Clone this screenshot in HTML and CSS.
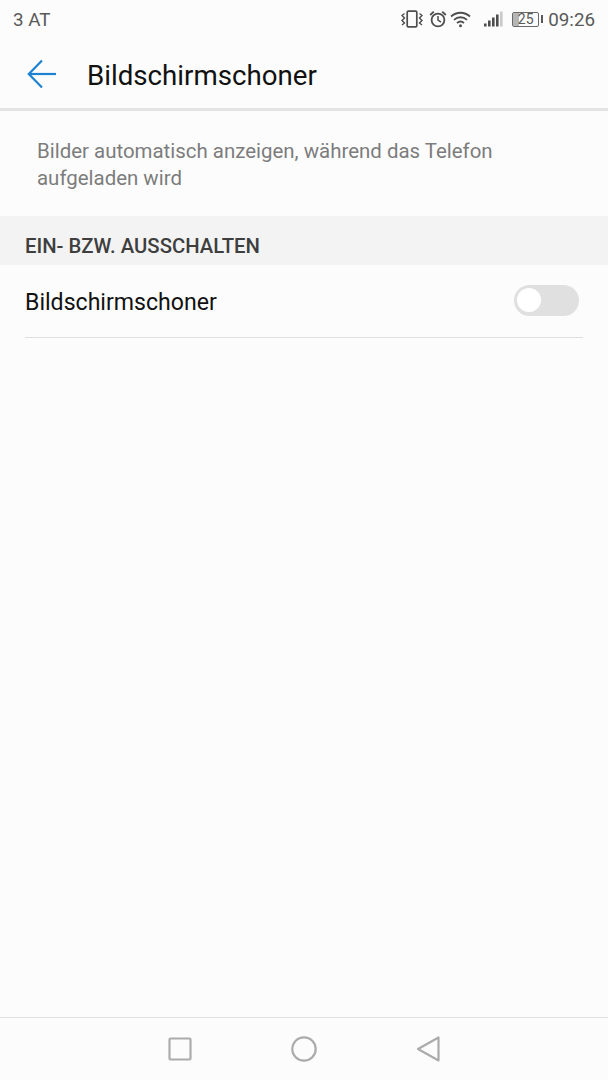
FILE: index.html
```html
<!DOCTYPE html>
<html lang="de">
<head>
    <meta charset="UTF-8">
    <meta name="viewport" content="width=device-width, initial-scale=1.0">
    <title>Bildschirmschoner</title>
    <link rel="stylesheet" href="styles.css">
</head>
<body>
    <div class="screen">
        <div class="status-bar">
            <span class="carrier">3 AT</span>
            <div class="status-icons">
                <svg class="icon-vibrate" width="22" height="18" viewBox="0 0 22 18" fill="none" stroke="#4e4e4e" stroke-width="1.7">
                    <rect x="6.2" y="1.2" width="9.6" height="15.6" rx="1"/>
                    <path d="M3.5 3.5 L1 5.5 L3.5 8 L1 10.5 L3.5 13 L1 15" stroke-width="1.4"/>
                    <path d="M18.5 3.5 L21 5.5 L18.5 8 L21 10.5 L18.5 13 L21 15" stroke-width="1.4"/>
                </svg>
                <svg class="icon-alarm" width="18" height="18" viewBox="0 0 18 18" fill="none" stroke="#4e4e4e" stroke-width="1.8">
                    <circle cx="9" cy="10" r="6.4"/>
                    <path d="M9 6 V10.2 L12 12.2" stroke-width="1.5"/>
                    <path d="M1.2 5 L4.8 1.6 M16.8 5 L13.2 1.6"/>
                </svg>
                <svg class="icon-wifi" width="21" height="17" viewBox="0 0 21 17" fill="none" stroke="#4e4e4e" stroke-width="1.8">
                    <path d="M1 5.5 C6.5 0.5 14.5 0.5 20 5.5"/>
                    <path d="M4 8.8 C7.8 5.4 13.2 5.4 17 8.8"/>
                    <path d="M7 12 C9 10.3 12 10.3 14 12"/>
                    <circle cx="10.5" cy="14.8" r="1.5" fill="#4e4e4e" stroke="none"/>
                </svg>
                <svg class="icon-signal" width="19" height="17" viewBox="0 0 19 17">
                    <rect x="0" y="12.5" width="2.6" height="3" fill="#4e4e4e"/>
                    <rect x="4" y="9.5" width="2.6" height="6" fill="#4e4e4e"/>
                    <rect x="8" y="6.5" width="2.6" height="9" fill="#4e4e4e"/>
                    <rect x="12" y="3.5" width="2.6" height="12" fill="#4e4e4e"/>
                    <rect x="16" y="0.5" width="2.6" height="15" fill="#c9c9c9"/>
                </svg>
                <div class="battery">
                    <div class="battery-body">
                        <div class="battery-fill"></div>
                        <span class="battery-level">25</span>
                    </div>
                    <div class="battery-tip"></div>
                </div>
                <span class="clock">09:26</span>
            </div>
        </div>

        <div class="title-bar">
            <svg class="back-arrow" width="30" height="30" viewBox="0 0 30 30" fill="none" stroke="#1e82d2" stroke-width="2.2">
                <path d="M29 15 H2"/>
                <path d="M15 1.5 L1.8 15 L15 28.5"/>
            </svg>
            <h1>Bildschirmschoner</h1>
        </div>

        <p class="description">Bilder automatisch anzeigen, während das Telefon aufgeladen wird</p>

        <div class="section-header">EIN- BZW. AUSSCHALTEN</div>

        <div class="setting-row">
            <span class="setting-label">Bildschirmschoner</span>
            <div class="switch"><div class="switch-knob"></div></div>
        </div>

        <div class="spacer"></div>

        <div class="nav-bar">
            <svg width="24" height="24" viewBox="0 0 24 24" fill="none" stroke="#ababab" stroke-width="2.2">
                <rect x="1.5" y="1.5" width="21" height="21" rx="1"/>
            </svg>
            <svg width="26" height="26" viewBox="0 0 26 26" fill="none" stroke="#ababab" stroke-width="2.2">
                <circle cx="13" cy="13" r="11.7"/>
            </svg>
            <svg width="24" height="26" viewBox="0 0 24 26" fill="none" stroke="#ababab" stroke-width="2.2" stroke-linejoin="round">
                <path d="M22.5 1.5 V24.5 L2 13 Z"/>
            </svg>
        </div>
    </div>
</body>
</html>
```

FILE: styles.css
```css
html, body {
    margin: 0;
    padding: 0;
}
body {
    font-family: Roboto, 'Noto Sans', sans-serif;
    background-color: #fcfcfc;
}
.screen {
    width: 608px;
    height: 1080px;
    display: flex;
    flex-direction: column;
    overflow: hidden;
}
.status-bar {
    height: 38px;
    display: flex;
    align-items: center;
    justify-content: space-between;
    padding: 0 13px 0 13px;
    color: #5a5a5a;
    font-size: 18.8px;
    flex-shrink: 0;
}
.carrier, .clock {
    margin-top: 2px;
}
.status-icons {
    display: flex;
    align-items: center;
}
.icon-vibrate {
    margin-right: 6px;
}
.icon-alarm {
    margin-right: 3px;
}
.icon-wifi {
    margin-right: 13px;
}
.icon-signal {
    margin-right: 9px;
}
.battery {
    display: flex;
    align-items: center;
    margin-right: 5px;
}
.battery-body {
    position: relative;
    width: 25px;
    height: 13px;
    border: 1px solid #6a6a6a;
    border-radius: 2px;
}
.battery-fill {
    width: 6px;
    height: 100%;
    background-color: #b5b5b5;
}
.battery-level {
    position: absolute;
    top: 0;
    left: 0;
    right: 0;
    text-align: center;
    font-size: 14px;
    line-height: 13px;
}
.battery-tip {
    width: 2px;
    height: 8px;
    margin-left: 2px;
    background-color: #5a5a5a;
}
.title-bar {
    height: 70px;
    box-sizing: content-box;
    display: flex;
    align-items: center;
    padding-left: 27px;
    border-bottom: 3px solid #e4e4e4;
    flex-shrink: 0;
}
.back-arrow {
    margin-top: 2px;
}
.title-bar h1 {
    margin: 4px 0 0 30px;
    font-size: 27.7px;
    font-weight: 400;
    color: #111;
}
.description {
    margin: 0;
    padding: 27px 37px 24px 37px;
    font-size: 20.45px;
    line-height: 27px;
    color: #7c7c7c;
    flex-shrink: 0;
}
.section-header {
    height: 49px;
    line-height: 61px;
    padding-left: 25px;
    background-color: #f3f3f3;
    font-size: 20.3px;
    font-weight: 500;
    color: #3e3e3e;
    flex-shrink: 0;
    overflow: hidden;
}
.setting-row {
    height: 72px;
    margin: 0 25px;
    display: flex;
    align-items: center;
    justify-content: space-between;
    border-bottom: 1px solid #e0e0e0;
    flex-shrink: 0;
}
.setting-label {
    margin-top: 2px;
    font-size: 23.1px;
    color: #111;
}
.switch {
    width: 65px;
    height: 31px;
    margin: 0 4px 2px 0;
    border-radius: 16px;
    background-color: #e0e0e0;
    display: flex;
    align-items: center;
    padding-left: 3px;
    box-sizing: border-box;
}
.switch-knob {
    width: 24px;
    height: 24px;
    border-radius: 50%;
    background-color: #fff;
}
.spacer {
    flex: 1;
}
.nav-bar {
    height: 62px;
    border-top: 1px solid #e0e0e0;
    display: flex;
    align-items: center;
    justify-content: center;
    gap: 99px;
    flex-shrink: 0;
}
```
